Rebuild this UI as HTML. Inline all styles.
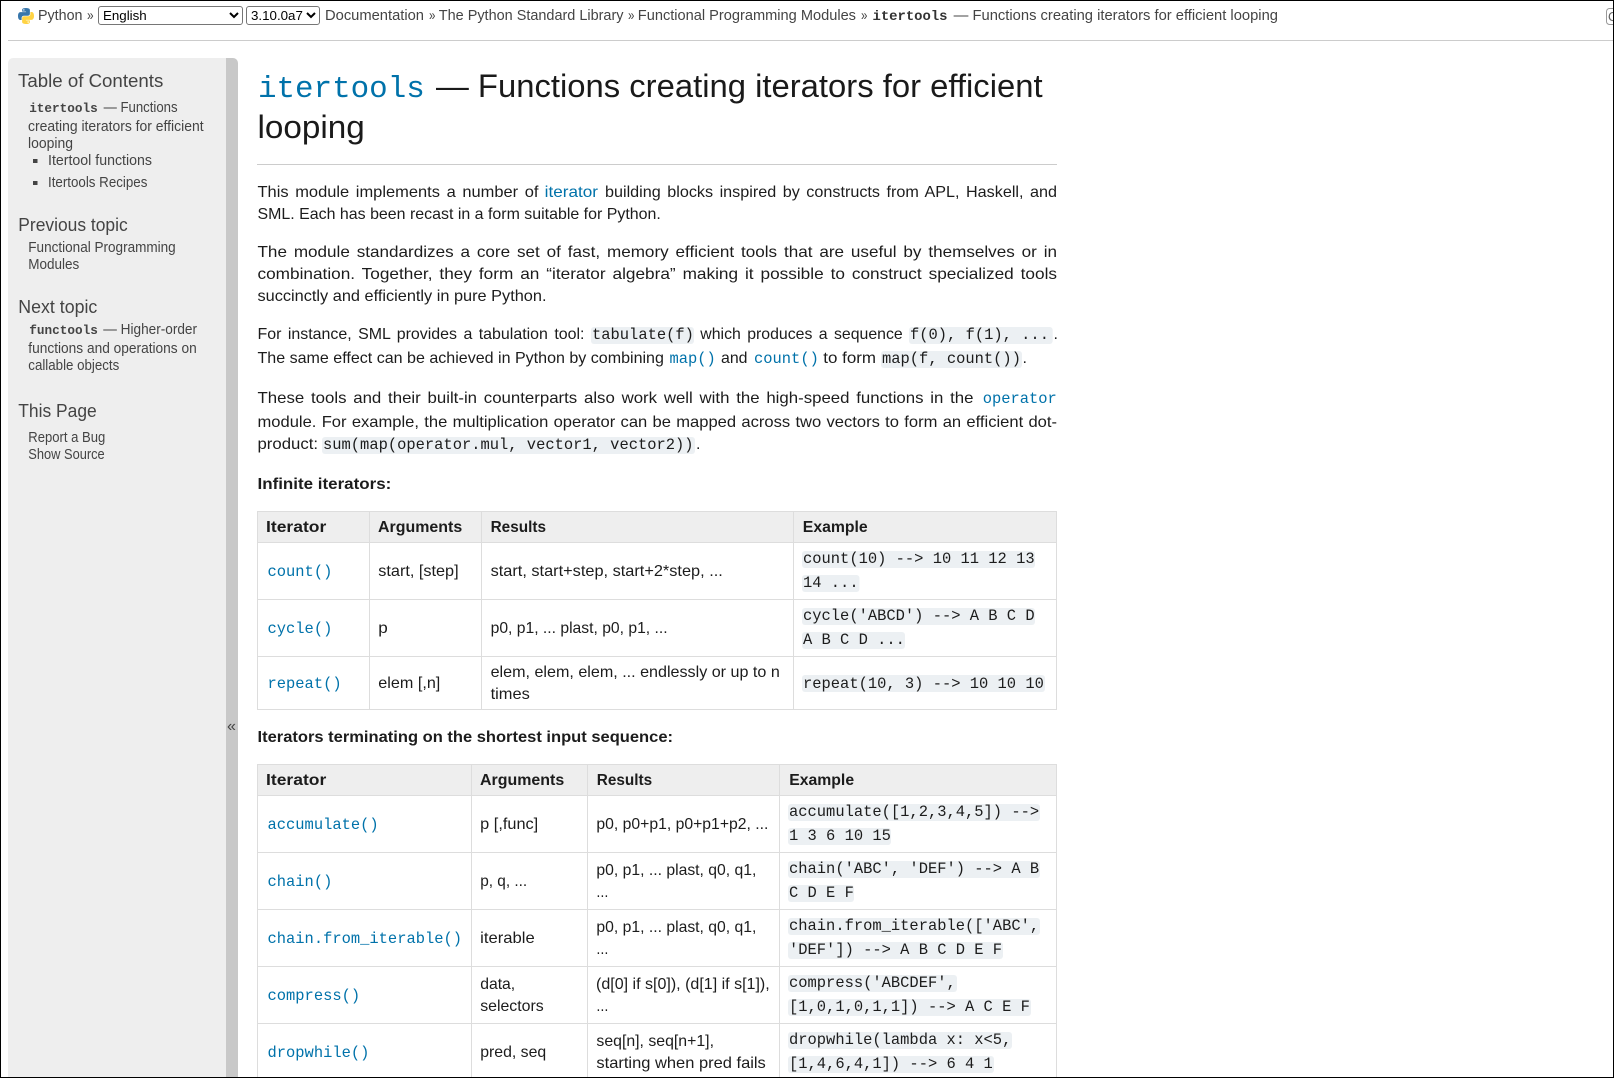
<!DOCTYPE html>
<html lang="en"><head><meta charset="utf-8"><title>itertools — Functions creating iterators for efficient looping</title>
<style>
html,body{margin:0;padding:0;background:#fff;width:1614px;height:1078px;overflow:hidden}
svg{position:absolute;left:0;top:0}
select{position:absolute;top:6px;height:19px;box-sizing:border-box;font:13.333px "Liberation Sans",sans-serif;margin:0;background:#fff;color:#000;border:1px solid #767676;border-radius:3px}
text{font-family:"Liberation Sans",sans-serif;font-size:16px;fill:#1c1c1c}
.m{font-family:"Liberation Mono",monospace;font-size:15.44px}
.l{fill:#0072aa}
.b{font-weight:bold}
.t{fill:#444;font-size:14.4px}
.s{fill:#444;font-size:14.4px}
.h{fill:#444;font-size:18.6px}
.sm{font-family:"Liberation Mono",monospace;font-size:12.7px;font-weight:bold;fill:#444}
.c{fill:#ecf0f3}
.j{word-spacing:2px}
.h1{font-size:32px;fill:#1a1a1a}
</style></head><body>
<svg width="1614" height="1078" viewBox="0 0 1614 1078" xmlns="http://www.w3.org/2000/svg">
<!-- header -->
<g transform="translate(18 8) scale(.1455)"><path fill="#3776ab" d="M54.9 0C26.8 0 28.6 12.2 28.6 12.2l0 12.6h26.8v3.8H17.9S0 26.6 0 54.9s15.6 27.3 15.6 27.3h9.3V69s-.5-15.6 15.4-15.6h26.5s14.9.2 14.9-14.4V14.5S83.9 0 54.9 0zM40.2 8.4c2.7 0 4.8 2.2 4.8 4.8s-2.2 4.8-4.8 4.8-4.8-2.2-4.8-4.8 2.2-4.8 4.8-4.8z"/><path fill="#ffd343" transform="rotate(180 55 55)" d="M54.9 0C26.8 0 28.6 12.2 28.6 12.2l0 12.6h26.8v3.8H17.9S0 26.6 0 54.9s15.6 27.3 15.6 27.3h9.3V69s-.5-15.6 15.4-15.6h26.5s14.9.2 14.9-14.4V14.5S83.9 0 54.9 0zM40.2 8.4c2.7 0 4.8 2.2 4.8 4.8s-2.2 4.8-4.8 4.8-4.8-2.2-4.8-4.8 2.2-4.8 4.8-4.8z"/></g>
<text class="t" x="38" y="20" textLength="44.5" lengthAdjust="spacingAndGlyphs">Python</text>
<text class="t" x="87" y="20" textLength="6.6" lengthAdjust="spacingAndGlyphs">»</text>
<text class="t" x="325" y="20" textLength="99" lengthAdjust="spacingAndGlyphs">Documentation</text>
<text class="t" x="429" y="20" textLength="6.4" lengthAdjust="spacingAndGlyphs">»</text>
<text class="t" x="438.8" y="20" textLength="184.7" lengthAdjust="spacingAndGlyphs">The Python Standard Library</text>
<text class="t" x="628" y="20" textLength="6.4" lengthAdjust="spacingAndGlyphs">»</text>
<text class="t" x="637.8" y="20" textLength="218.2" lengthAdjust="spacingAndGlyphs">Functional Programming Modules</text>
<text class="t" x="861" y="20" textLength="6.4" lengthAdjust="spacingAndGlyphs">»</text>
<text class="sm" style="font-size:13.9px;fill:#333" x="872.5" y="20">itertools</text>
<text class="t" x="953.7" y="20" textLength="324.3" lengthAdjust="spacingAndGlyphs">— Functions creating iterators for efficient looping</text>
<rect x="1606.5" y="8.5" width="14" height="16" rx="3" fill="#fff" stroke="#999"/>
<text x="1608" y="21" style="font-size:13.3px;fill:#666">Q</text>
<rect x="8" y="40" width="1606" height="1" fill="#ccc"/>
<!-- sidebar -->
<path d="M8 1078V63a5 5 0 0 1 5-5H226V1078z" fill="#eee"/>
<path d="M226 58h7a5 5 0 0 1 5 5V1078H226z" fill="#c8c8c8"/>
<text x="227" y="731" style="font-size:16px;fill:#444">«</text>
<text class="h" x="18" y="87" textLength="145.3" lengthAdjust="spacingAndGlyphs">Table of Contents</text>
<text class="sm" x="29.2" y="112">itertools</text>
<text class="s" x="103.6" y="112" textLength="74" lengthAdjust="spacingAndGlyphs">— Functions</text>
<text class="s" x="28" y="131" textLength="175.6" lengthAdjust="spacingAndGlyphs">creating iterators for efficient</text>
<text class="s" x="28" y="148" textLength="45" lengthAdjust="spacingAndGlyphs">looping</text>
<rect x="33" y="159" width="4.5" height="4" fill="#444"/>
<text class="s" x="48" y="165" textLength="104" lengthAdjust="spacingAndGlyphs">Itertool functions</text>
<rect x="33" y="181" width="4.5" height="4" fill="#444"/>
<text class="s" x="48" y="187" textLength="99.4" lengthAdjust="spacingAndGlyphs">Itertools Recipes</text>
<text class="h" x="18.3" y="231" textLength="109.4" lengthAdjust="spacingAndGlyphs">Previous topic</text>
<text class="s" x="28.3" y="252" textLength="147.4" lengthAdjust="spacingAndGlyphs">Functional Programming</text>
<text class="s" x="28.3" y="269" textLength="51" lengthAdjust="spacingAndGlyphs">Modules</text>
<text class="h" x="18.3" y="313" textLength="79" lengthAdjust="spacingAndGlyphs">Next topic</text>
<text class="sm" x="29.3" y="334">functools</text>
<text class="s" x="103.3" y="334" textLength="93.7" lengthAdjust="spacingAndGlyphs">— Higher-order</text>
<text class="s" x="28.3" y="353" textLength="168.4" lengthAdjust="spacingAndGlyphs">functions and operations on</text>
<text class="s" x="28.3" y="370" textLength="91" lengthAdjust="spacingAndGlyphs">callable objects</text>
<text class="h" x="18.3" y="417" textLength="78.4" lengthAdjust="spacingAndGlyphs">This Page</text>
<text class="s" x="28.3" y="442" textLength="77" lengthAdjust="spacingAndGlyphs">Report a Bug</text>
<text class="s" x="28.3" y="459" textLength="76.4" lengthAdjust="spacingAndGlyphs">Show Source</text>
<!-- title -->
<text class="m l" style="font-size:30.88px" x="258" y="97">itertools</text>
<text class="h1" x="436" y="97" textLength="606.6" lengthAdjust="spacingAndGlyphs">— Functions creating iterators for efficient</text>
<text class="h1" x="257.5" y="138" textLength="107.3" lengthAdjust="spacingAndGlyphs">looping</text>
<rect x="257" y="164" width="800" height="1" fill="#ccc"/>
<!-- paragraphs -->
<text class="j" x="257.5" y="197" textLength="281" lengthAdjust="spacingAndGlyphs">This module implements a number of</text>
<text class="l" x="544.7" y="197" textLength="53.3" lengthAdjust="spacingAndGlyphs">iterator</text>
<text class="j" x="605" y="197" textLength="452" lengthAdjust="spacingAndGlyphs">building blocks inspired by constructs from APL, Haskell, and</text>
<text x="257.5" y="219" textLength="403.3" lengthAdjust="spacingAndGlyphs">SML. Each has been recast in a form suitable for Python.</text>
<text class="j" x="257.5" y="257" textLength="799.5" lengthAdjust="spacingAndGlyphs">The module standardizes a core set of fast, memory efficient tools that are useful by themselves or in</text>
<text class="j" x="257.5" y="279" textLength="799.5" lengthAdjust="spacingAndGlyphs">combination. Together, they form an “iterator algebra” making it possible to construct specialized tools</text>
<text x="257.5" y="301" textLength="289" lengthAdjust="spacingAndGlyphs">succinctly and efficiently in pure Python.</text>
<text class="j" x="257.5" y="339" textLength="327" lengthAdjust="spacingAndGlyphs">For instance, SML provides a tabulation tool:</text>
<rect class="c" x="591" y="327" width="103" height="17" rx="3"/>
<text class="m" x="592" y="339">tabulate(f)</text>
<text class="j" x="700.3" y="339" textLength="202.4" lengthAdjust="spacingAndGlyphs">which produces a sequence</text>
<rect class="c" x="909" y="327" width="143.7" height="17" rx="3"/>
<text class="m" x="910" y="339">f(0), f(1), ...</text>
<text x="1053.5" y="339">.</text>
<text x="257.5" y="363" textLength="406.4" lengthAdjust="spacingAndGlyphs">The same effect can be achieved in Python by combining</text>
<text class="m l" x="669.5" y="363">map()</text>
<text x="721" y="363" textLength="26.5" lengthAdjust="spacingAndGlyphs">and</text>
<text class="m l" x="754" y="363">count()</text>
<text x="823.3" y="363" textLength="52.7" lengthAdjust="spacingAndGlyphs">to form</text>
<rect class="c" x="881" y="351" width="141" height="17" rx="3"/>
<text class="m" x="882" y="363">map(f, count())</text>
<text x="1022.5" y="363">.</text>
<text class="j" x="257.5" y="403" textLength="716" lengthAdjust="spacingAndGlyphs">These tools and their built-in counterparts also work well with the high-speed functions in the</text>
<text class="m l" x="982.7" y="403">operator</text>
<text class="j" style="word-spacing:.7px" x="257.5" y="427" textLength="799.5" lengthAdjust="spacingAndGlyphs">module. For example, the multiplication operator can be mapped across two vectors to form an efficient dot-</text>
<text x="257.5" y="449" textLength="60.5" lengthAdjust="spacingAndGlyphs">product:</text>
<rect class="c" x="322" y="437" width="373" height="17" rx="3"/>
<text class="m" x="323" y="449">sum(map(operator.mul, vector1, vector2))</text>
<text x="696" y="449">.</text>
<text class="b" x="257.5" y="489" textLength="133.8" lengthAdjust="spacingAndGlyphs">Infinite iterators:</text>
<!-- table 1 -->
<rect x="258" y="512" width="798" height="30" fill="#eee"/>
<path fill="none" stroke="#ddd" d="M257 511.5H1057M257 542.5H1057M257 599.5H1057M257 656.5H1057M257 709.5H1057M257.5 511V710M369.5 511V710M481.5 511V710M793.5 511V710M1056.5 511V710"/>
<text class="b" x="266" y="532" textLength="60.3" lengthAdjust="spacingAndGlyphs">Iterator</text>
<text class="b" x="378" y="532" textLength="84.2" lengthAdjust="spacingAndGlyphs">Arguments</text>
<text class="b" x="490.6" y="532" textLength="55.4" lengthAdjust="spacingAndGlyphs">Results</text>
<text class="b" x="802.8" y="532" textLength="64.9" lengthAdjust="spacingAndGlyphs">Example</text>
<text class="m l" x="267.5" y="576">count()</text>
<text x="378.3" y="576" textLength="80.3" lengthAdjust="spacingAndGlyphs">start, [step]</text>
<text x="490.6" y="576" textLength="232.2" lengthAdjust="spacingAndGlyphs">start, start+step, start+2*step, ...</text>
<rect class="c" x="802" y="551" width="233" height="17" rx="3"/><text class="m" x="803" y="563">count(10) --&gt; 10 11 12 13</text>
<rect class="c" x="802" y="575" width="57.5" height="17" rx="3"/><text class="m" x="803" y="587">14 ...</text>
<text class="m l" x="267.5" y="633">cycle()</text>
<text x="378.3" y="633" textLength="9.5" lengthAdjust="spacingAndGlyphs">p</text>
<text x="490.6" y="633" textLength="177" lengthAdjust="spacingAndGlyphs">p0, p1, ... plast, p0, p1, ...</text>
<rect class="c" x="802" y="608" width="233" height="17" rx="3"/><text class="m" x="803" y="620">cycle('ABCD') --&gt; A B C D</text>
<rect class="c" x="802" y="632" width="103" height="17" rx="3"/><text class="m" x="803" y="644">A B C D ...</text>
<text class="m l" x="267.5" y="688">repeat()</text>
<text x="378.3" y="688" textLength="62" lengthAdjust="spacingAndGlyphs">elem [,n]</text>
<text x="490.6" y="677" textLength="289.2" lengthAdjust="spacingAndGlyphs">elem, elem, elem, ... endlessly or up to n</text>
<text x="490.6" y="699" textLength="39.2" lengthAdjust="spacingAndGlyphs">times</text>
<rect class="c" x="802" y="675" width="243" height="17" rx="3"/><text class="m" x="803" y="688">repeat(10, 3) --&gt; 10 10 10</text>
<text class="b" x="257.5" y="742" textLength="415.5" lengthAdjust="spacingAndGlyphs">Iterators terminating on the shortest input sequence:</text>
<!-- table 2 -->
<rect x="258" y="765" width="798" height="30" fill="#eee"/>
<path fill="none" stroke="#ddd" d="M257 764.5H1057M257 795.5H1057M257 852.5H1057M257 909.5H1057M257 966.5H1057M257 1023.5H1057M257.5 764V1078M471.5 764V1078M587.5 764V1078M779.5 764V1078M1056.5 764V1078"/>
<text class="b" x="266" y="785" textLength="60.3" lengthAdjust="spacingAndGlyphs">Iterator</text>
<text class="b" x="480" y="785" textLength="84.2" lengthAdjust="spacingAndGlyphs">Arguments</text>
<text class="b" x="596.8" y="785" textLength="55.4" lengthAdjust="spacingAndGlyphs">Results</text>
<text class="b" x="789.2" y="785" textLength="64.9" lengthAdjust="spacingAndGlyphs">Example</text>

<text class="m l" x="267.5" y="829">accumulate()</text>
<text x="480.2" y="829" textLength="58" lengthAdjust="spacingAndGlyphs">p [,func]</text>
<text x="596.4" y="829" textLength="172" lengthAdjust="spacingAndGlyphs">p0, p0+p1, p0+p1+p2, ...</text>
<rect class="c" x="788" y="804" width="252" height="17" rx="3"/><text class="m" x="789" y="816">accumulate([1,2,3,4,5]) --&gt;</text>
<rect class="c" x="788" y="828" width="103" height="17" rx="3"/><text class="m" x="789" y="840">1 3 6 10 15</text>

<text class="m l" x="267.5" y="886">chain()</text>
<text x="480.2" y="886" textLength="47" lengthAdjust="spacingAndGlyphs">p, q, ...</text>
<text x="596.4" y="875" textLength="160" lengthAdjust="spacingAndGlyphs">p0, p1, ... plast, q0, q1,</text>
<text x="596.4" y="897" textLength="12" lengthAdjust="spacingAndGlyphs">...</text>
<rect class="c" x="788" y="861" width="252" height="17" rx="3"/><text class="m" x="789" y="873">chain('ABC', 'DEF') --&gt; A B</text>
<rect class="c" x="788" y="885" width="66" height="17" rx="3"/><text class="m" x="789" y="897">C D E F</text>

<text class="m l" x="267.5" y="943">chain.from_iterable()</text>
<text x="480.2" y="943" textLength="54.5" lengthAdjust="spacingAndGlyphs">iterable</text>
<text x="596.4" y="932" textLength="160" lengthAdjust="spacingAndGlyphs">p0, p1, ... plast, q0, q1,</text>
<text x="596.4" y="954" textLength="12" lengthAdjust="spacingAndGlyphs">...</text>
<rect class="c" x="788" y="918" width="252" height="17" rx="3"/><text class="m" x="789" y="930">chain.from_iterable(['ABC',</text>
<rect class="c" x="788" y="942" width="215" height="17" rx="3"/><text class="m" x="789" y="954">'DEF']) --&gt; A B C D E F</text>

<text class="m l" x="267.5" y="1000">compress()</text>
<text x="480.2" y="989" textLength="35" lengthAdjust="spacingAndGlyphs">data,</text>
<text x="480.2" y="1011" textLength="63.5" lengthAdjust="spacingAndGlyphs">selectors</text>
<text x="596" y="989" textLength="173.7" lengthAdjust="spacingAndGlyphs">(d[0] if s[0]), (d[1] if s[1]),</text>
<text x="596.4" y="1011" textLength="12" lengthAdjust="spacingAndGlyphs">...</text>
<rect class="c" x="788" y="975" width="169" height="17" rx="3"/><text class="m" x="789" y="987">compress('ABCDEF',</text>
<rect class="c" x="788" y="999" width="243" height="17" rx="3"/><text class="m" x="789" y="1011">[1,0,1,0,1,1]) --&gt; A C E F</text>

<text class="m l" x="267.5" y="1057">dropwhile()</text>
<text x="480.2" y="1057" textLength="66" lengthAdjust="spacingAndGlyphs">pred, seq</text>
<text x="596.4" y="1046" textLength="117.6" lengthAdjust="spacingAndGlyphs">seq[n], seq[n+1],</text>
<text x="596.4" y="1068" textLength="169.4" lengthAdjust="spacingAndGlyphs">starting when pred fails</text>
<rect class="c" x="788" y="1032" width="224" height="17" rx="3"/><text class="m" x="789" y="1044">dropwhile(lambda x: x&lt;5,</text>
<rect class="c" x="788" y="1056" width="206" height="17" rx="3"/><text class="m" x="789" y="1068">[1,4,6,4,1]) --&gt; 6 4 1</text>
<!-- frame -->
<rect x="0.5" y="0.5" width="1613" height="1077" fill="none" stroke="#000"/>
</svg>
<select style="left:98px;width:145px"><option>English</option></select>
<select style="left:246px;width:74px"><option>3.10.0a7</option></select>
</body></html>
